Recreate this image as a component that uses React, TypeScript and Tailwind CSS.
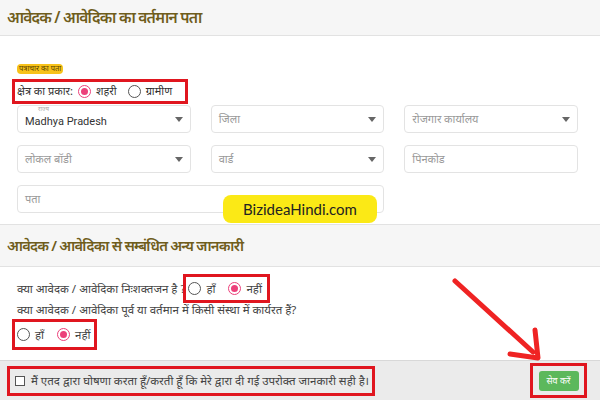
import React from 'react'

const font = { fontFamily: '"Noto Sans", "Noto Sans Devanagari", Roboto, sans-serif' }

function Radio({ checked }: { checked?: boolean }) {
  return checked ? (
    <span className="w-[13px] h-[13px] shrink-0 rounded-full border-[1.5px] border-[#ec407a] flex items-center justify-center">
      <span className="w-[7px] h-[7px] rounded-full bg-[#ec407a]" />
    </span>
  ) : (
    <span className="w-[13px] h-[13px] shrink-0 rounded-full border-[1.5px] border-[#555]" />
  )
}

function Caret() {
  return (
    <svg width="8" height="5" viewBox="0 0 8 5" className="shrink-0">
      <path d="M0 0h8L4 5z" fill="#666" />
    </svg>
  )
}

function Field({ label, value, select, small }: { label: string; value?: string; select?: boolean; small?: string }) {
  return (
    <div className="h-[28px] rounded border border-[#e3e3e3] bg-white px-[7px] flex items-center justify-between relative">
      {small && <span className="absolute left-[20px] top-0 text-[6px] leading-none text-[#aaa]">{small}</span>}
      <span className={value ? 'text-[11px] text-[#333] mt-[6px]' : 'text-[11px] text-[#999] mt-[3px]'} style={{ fontFamily: 'Roboto, "Noto Sans", sans-serif' }}>
        {value ?? label}
      </span>
      {select && <Caret />}
    </div>
  )
}

export default function App() {
  return (
    <div className="w-[600px] h-[400px] bg-white relative overflow-hidden text-[#333]" style={font}>
      {/* section 1 header */}
      <div className="h-[36px] bg-[#f6f6f6] border-b border-[#e2e2e2] px-[7px] flex items-center">
        <h2 className="text-[15.5px] font-semibold text-[#6f5d1c] tracking-tighter">आवेदक / आवेदिका का वर्तमान पता</h2>
      </div>

      <div className="h-[188px] pl-[17px] pr-[22px] pt-[17px]">
        <span className="inline-flex items-center h-[10px] px-[2px] rounded-sm bg-[#f7c21a] text-[7.5px] text-[#5a4300] leading-none whitespace-nowrap">पत्राचार का पता</span>
        <div className="-ml-[5px] mt-[2px] w-[176px] h-[25px] border-[3px] border-[#e0161f] flex items-center gap-[5px] px-[2px] text-[11px] whitespace-nowrap">
          <span>क्षेत्र का प्रकार:</span>
          <Radio checked />
          <span className="mr-[6px]">शहरी</span>
          <Radio />
          <span>ग्रामीण</span>
        </div>
        <div className="grid grid-cols-3 gap-x-[20px] gap-y-[12px] mt-[1px]">
          <Field label="राज्य" value="Madhya Pradesh" small="राज्य" select />
          <Field label="जिला" select />
          <Field label="रोजगार कार्यालय" select />
          <Field label="लोकल बॉडी" select />
          <Field label="वार्ड" select />
          <Field label="पिनकोड" />
          <div className="col-span-2">
            <Field label="पता" />
          </div>
        </div>
      </div>

      {/* section 2 header */}
      <div className="h-[43px] bg-[#f6f6f6] border-t border-[#e2e2e2] border-b px-[7px] flex items-center">
        <h2 className="text-[14.5px] font-semibold text-[#6f5d1c] tracking-tighter">आवेदक / आवेदिका से सम्बंधित अन्य जानकारी</h2>
      </div>

      <div className="h-[93px] pl-[17px] pt-[7px] text-[11.5px] text-[#444]">
        <div className="flex items-center whitespace-nowrap">
          <span>क्या आवेदक / आवेदिका निःशक्तजन है ?</span>
          <div className="-ml-[2px] w-[87px] h-[29px] border-[3px] border-[#e0161f] flex items-center gap-[5px] px-[2px]">
            <Radio />
            <span className="mr-[8px]">हाँ</span>
            <Radio checked />
            <span>नहीं</span>
          </div>
        </div>
        <div className="-mt-[2px] whitespace-nowrap">क्या आवेदक / आवेदिका पूर्व या वर्तमान में किसी संस्था में कार्यरत हैं?</div>
        <div className="-ml-[5px] mt-[1px] w-[85px] h-[31px] border-[3px] border-[#e0161f] flex items-center gap-[5px] px-[2px]">
          <Radio />
          <span className="mr-[8px]">हाँ</span>
          <Radio checked />
          <span>नहीं</span>
        </div>
      </div>

      {/* footer */}
      <div className="h-[40px] bg-[#ebebeb] border-t border-[#d8d8d8] flex items-center justify-between pl-[7px] pr-[13px]">
        <div className="w-[368px] h-[30px] border-[3px] border-[#e0161f] flex items-center gap-[6px] pl-[5px] text-[11.5px] text-[#444] whitespace-nowrap">
          <span className="w-[10px] h-[10px] shrink-0 border border-[#555] bg-white" />
          <span>मैं एतद द्वारा घोषणा करता हूँ/करती हूँ कि मेरे द्वारा दी गई उपरोक्त जानकारी सही है।</span>
        </div>
        <div className="w-[57px] h-[35px] border-[3px] border-[#e0161f] flex items-center justify-center">
          <button className="w-[40px] h-[20px] rounded-[3px] bg-[#5cb85c] text-white text-[9px] whitespace-nowrap">सेव करें</button>
        </div>
      </div>

      {/* watermark */}
      <div className="absolute left-[223px] top-[195px] w-[154px] h-[28px] rounded-[8px] bg-[#fbe916] flex items-center justify-center text-[15px] text-[#222]" style={{ fontFamily: 'Lato, Inter, sans-serif' }}>
        BizideaHindi.com
      </div>

      {/* arrow */}
      <svg className="absolute left-0 top-0 pointer-events-none" width="600" height="400">
        <line x1="455" y1="281" x2="533" y2="352" stroke="#ef2323" strokeWidth="5" strokeLinecap="round" />
        <path d="M510 354 L538 358 L535 330" fill="none" stroke="#ef2323" strokeWidth="5" strokeLinecap="round" strokeLinejoin="round" />
      </svg>
    </div>
  )
}
